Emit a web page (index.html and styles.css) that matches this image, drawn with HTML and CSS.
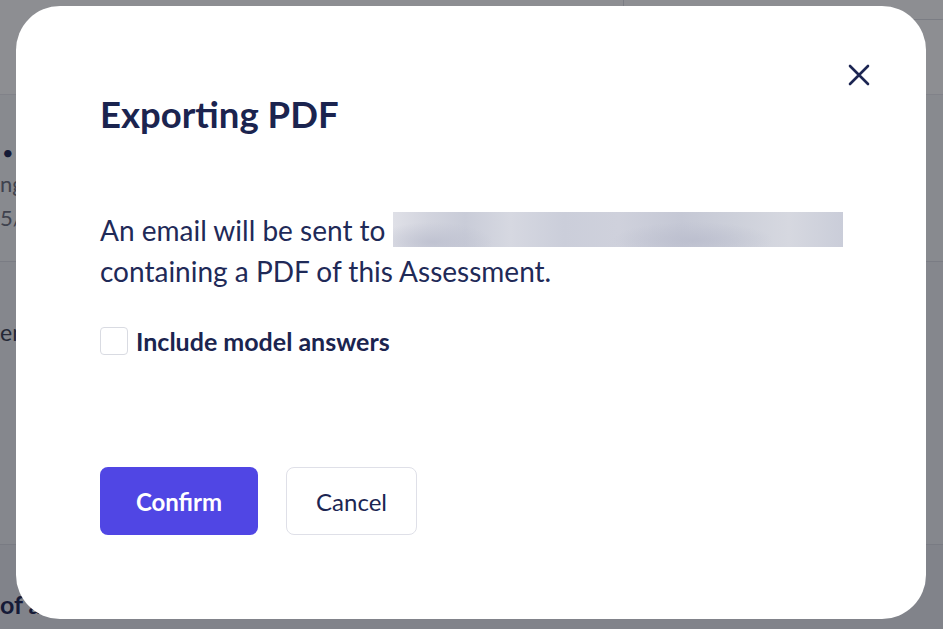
FILE: index.html
```html
<!DOCTYPE html>
<html lang="en">
<head>
<meta charset="utf-8">
<title>Exporting PDF</title>
<link rel="stylesheet" href="styles.css">
</head>
<body>
<div class="page">
  <header class="page-header">
    <div class="header-spacer"></div>
    <div class="header-card"></div>
  </header>
  <section class="summary">
    <div class="meta-dots">• •</div>
    <div class="meta-line meta-grey">ng status</div>
    <div class="meta-line meta-grey meta-date">5/11/2023</div>
  </section>
  <section class="content">
    <div class="content-line">en questions</div>
  </section>
  <section class="footer-section">
    <div class="footer-line">of assessment</div>
  </section>
</div>

<div class="overlay">
  <div class="modal" role="dialog" aria-labelledby="modal-title">
    <button class="close-btn" aria-label="Close">
      <svg width="22" height="22" viewBox="0 0 22 22" fill="none" stroke="currentColor" stroke-width="2.6" stroke-linecap="round">
        <path d="M2 2 L20 20 M20 2 L2 20"/>
      </svg>
    </button>
    <h2 class="modal-title" id="modal-title">Exporting PDF</h2>
    <p class="modal-text"><span class="first-line">An email will be sent to <span class="redacted"></span></span><br>containing a PDF of this Assessment.</p>
    <label class="check-row">
      <span class="checkbox"></span>
      <span class="check-label">Include model answers</span>
    </label>
    <div class="actions">
      <button class="btn btn-primary">Confirm</button>
      <button class="btn btn-secondary">Cancel</button>
    </div>
  </div>
</div>
</body>
</html>
```
FILE: styles.css
```css
* { box-sizing: border-box; }

html, body {
  margin: 0;
  height: 100%;
  overflow: hidden;
}

body {
  font-family: "Lato", "Open Sans", sans-serif;
  color: #1c2552;
  background: #ffffff;
}

/* background page */
.page {
  display: flex;
  flex-direction: column;
  height: 629px;
}

.page-header {
  height: 95px;
  flex: none;
  display: flex;
  background: #fdfdfe;
  border-bottom: 1px solid #e6e7ec;
}

.header-spacer { flex: 1; }

.header-card {
  width: 330px;
  margin-right: -10px;
  height: 20px;
  border: 1px solid #dcdde3;
  border-top: none;
  border-radius: 0 0 12px 12px;
}

.summary {
  height: 167px;
  flex: none;
  background: #f4f5f8;
  border-bottom: 1px solid #dadce3;
  padding-top: 42px;
  overflow: hidden;
}

.meta-dots {
  font-size: 20px;
  line-height: 30px;
  padding-left: 2px;
  color: #1c2552;
  letter-spacing: 12px;
}

.meta-line {
  font-size: 22px;
  line-height: 34px;
  white-space: nowrap;
}

.meta-grey { color: #6b6f7d; }

.content {
  height: 283px;
  flex: none;
  background: #eef0f4;
  border-bottom: 1px solid #d8dae1;
  padding-top: 56px;
  overflow: hidden;
}

.content-line {
  font-size: 23px;
  color: #3a3f52;
  white-space: nowrap;
}

.footer-section {
  flex: 1;
  background: #e6e9ef;
  padding-top: 44px;
  overflow: hidden;
}

.footer-line {
  font-size: 25px;
  font-weight: 700;
  color: #1c2552;
  white-space: nowrap;
}

/* overlay + modal */
.overlay {
  position: fixed;
  inset: 0;
  background: rgba(14, 16, 26, 0.47);
}

.modal {
  position: absolute;
  left: 16px;
  top: 6px;
  width: 910px;
  height: 613px;
  background: #ffffff;
  border-radius: 44px;
  padding: 86px 40px 0 84px;
  display: flex;
  flex-direction: column;
  align-items: flex-start;
}

.close-btn {
  position: absolute;
  left: 832px;
  top: 58px;
  width: 22px;
  height: 22px;
  padding: 0;
  border: none;
  background: none;
  color: #1c2552;
  cursor: pointer;
}

.close-btn svg { display: block; }

.modal-title {
  margin: 0;
  font-size: 36.5px;
  line-height: 44px;
  font-weight: 700;
  color: #1b244f;
}

.modal-text {
  margin: 74px 0 0;
  font-size: 28px;
  line-height: 41px;
  color: #1f2a58;
}

.first-line { white-space: nowrap; }

.redacted {
  display: inline-block;
  width: 450px;
  height: 35px;
  vertical-align: -6px;
  background:
    radial-gradient(ellipse 60px 20px at 40px 30px, rgba(190,193,208,0.9), transparent),
    radial-gradient(ellipse 80px 18px at 300px 28px, rgba(186,189,205,0.8), transparent),
    linear-gradient(90deg, #dfe0e7 0%, #d2d4de 8%, #c9ccd8 16%, #d6d8e1 26%, #cbceda 38%, #cfd1dc 50%, #c5c8d5 64%, #cdd0da 76%, #d6d8e0 88%, #cacdd9 100%);
}

.check-row {
  margin-top: 34px;
  display: flex;
  align-items: center;
  gap: 8px;
  cursor: pointer;
}

.checkbox {
  width: 28px;
  height: 28px;
  border: 1px solid #d9dbe2;
  border-radius: 4px;
  background: #fff;
}

.check-label {
  font-size: 25px;
  line-height: 30px;
  font-weight: 700;
  color: #1b244f;
}

.actions {
  margin-top: 111px;
  display: flex;
  gap: 28px;
}

.btn {
  height: 68px;
  border-radius: 8px;
  font-family: inherit;
  font-size: 24px;
  cursor: pointer;
}

.btn-primary {
  width: 158px;
  background: #5046e4;
  border: none;
  color: #ffffff;
  font-weight: 700;
}

.btn-secondary {
  width: 131px;
  background: #ffffff;
  border: 1px solid #dfe0e8;
  color: #1c2552;
  font-weight: 400;
}
```
